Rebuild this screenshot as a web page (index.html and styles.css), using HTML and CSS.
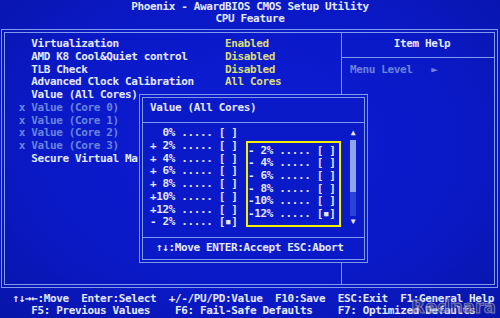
FILE: index.html
```html
<!DOCTYPE html>
<html lang="en">
<head>
    <meta charset="UTF-8">
    <meta name="viewport" content="width=device-width, initial-scale=1.0">
    <title>CPU Feature</title>
    <link rel="stylesheet" href="styles.css">
</head>
<body>
<div class="screen">
    <header class="title">
        <div>Phoenix - AwardBIOS CMOS Setup Utility</div>
        <div>CPU Feature</div>
    </header>

    <div class="frame">
        <div class="items">
            <div class="row"><span class="label">Virtualization</span><span class="value">Enabled</span></div>
            <div class="row"><span class="label">AMD K8 Cool&amp;Quiet control</span><span class="value">Disabled</span></div>
            <div class="row"><span class="label">TLB Check</span><span class="value">Disabled</span></div>
            <div class="row"><span class="label">Advanced Clock Calibration</span><span class="value">All Cores</span></div>
            <div class="row"><span class="label">Value (All Cores)</span></div>
            <div class="row off"><span class="mark">x</span><span class="label">Value (Core 0)</span></div>
            <div class="row off"><span class="mark">x</span><span class="label">Value (Core 1)</span></div>
            <div class="row off"><span class="mark">x</span><span class="label">Value (Core 2)</span></div>
            <div class="row off"><span class="mark">x</span><span class="label">Value (Core 3)</span></div>
            <div class="row"><span class="label">Secure Virtual Ma</span></div>
        </div>
        <div class="help">
            <div class="help-head">Item Help</div>
            <div class="help-body"><span class="dim">Menu Level   &#9658;</span></div>
        </div>
    </div>

    <footer class="keys">
        <div>&#8593;&#8595;&#8594;&#8592;:Move  Enter:Select  +/-/PU/PD:Value  F10:Save  ESC:Exit  F1:General Help</div>
        <div>   F5: Previous Values    F6: Fail-Safe Defaults    F7: Optimized Defaults</div>
    </footer>

    <!-- pop-up list sits over the item list -->
    <div class="popup">
        <div class="popup-title">Value (All Cores)</div>
        <div class="popup-body">
            <div class="list">
                <div>  0% ..... [ ]</div>
                <div>+ 2% ..... [ ]</div>
                <div>+ 4% ..... [ ]</div>
                <div>+ 6% ..... [ ]</div>
                <div>+ 8% ..... [ ]</div>
                <div>+10% ..... [ ]</div>
                <div>+12% ..... [ ]</div>
                <div>- 2% ..... [&#9642;]</div>
            </div>
            <div class="list marked">
                <div>- 2% ..... [ ]</div>
                <div>- 4% ..... [ ]</div>
                <div>- 6% ..... [ ]</div>
                <div>- 8% ..... [ ]</div>
                <div>-10% ..... [ ]</div>
                <div>-12% ..... [&#9642;]</div>
            </div>
            <div class="scroll">
                <span>&#9650;</span>
                <div class="track"><div class="thumb"></div></div>
                <span>&#9660;</span>
            </div>
        </div>
        <div class="popup-foot">&#8593;&#8595;:Move ENTER:Accept ESC:Abort</div>
    </div>

    <div class="watermark">Rednara</div>
</div>
</body>
</html>
```

FILE: styles.css
```css
:root {
    --cw: 6.25px;
    --rh: 12.72px;
    --bg: #0b19c4;
    --line: #7f9bec;
    --text: #e4e8ff;
    --yellow: #dcdc78;
    --dim: #6b83dc;
}
body {
    margin: 0;
    background: var(--bg);
}
.screen {
    position: relative;
    width: 500px;
    height: 318px;
    overflow: hidden;
    background: radial-gradient(ellipse at 50% 45%, #0c1ed6 0%, #0a19c6 60%, #0815aa 100%);
    color: var(--text);
    font-family: "DejaVu Sans Mono", monospace;
    font-weight: bold;
    font-size: 11px;
    letter-spacing: -0.37px;
    line-height: var(--rh);
}
.title div, .row, .help-body, .keys div, .list div, .popup-title, .popup-foot {
    white-space: pre;
}
.title {
    height: calc(var(--rh) * 2);
    padding-top: 0.5px;
    box-sizing: border-box;
    text-align: center;
}
.frame {
    box-sizing: border-box;
    width: 497px;
    height: 259px;
    margin: 3.5px 0 0 1px;
    border: 4px double var(--line);
    display: grid;
    grid-template-columns: 337px 1fr;
}
.items {
    border-right: 1px solid var(--line);
    padding: 5.3px 0 0 26.25px;
}
.row {
    display: flex;
    height: var(--rh);
}
.label {
    width: calc(var(--cw) * 31);
}
.value {
    color: var(--yellow);
}
.mark {
    width: calc(var(--cw) * 2);
    margin-left: calc(var(--cw) * -2);
}
.row.off {
    color: var(--dim);
}
.help-head {
    padding: 5.3px 0 6.1px 8px;
    text-align: center;
    border-bottom: 1px solid var(--line);
}
.help-body {
    padding: 5.6px 0 0 8px;
}
.dim {
    color: var(--dim);
}
.keys {
    margin-top: 4.6px;
    padding-left: calc(var(--cw) * 2);
}
.popup {
    position: absolute;
    left: 139px;
    top: 94px;
    width: 229px;
    height: 169px;
    box-sizing: border-box;
    border: 4px double var(--line);
    background: #0b1ac8;
}
.popup-title {
    padding: 3.8px 0 7px 7px;
    border-bottom: 1px solid var(--line);
}
.popup-body {
    box-sizing: border-box;
    height: 115px;
    display: flex;
    align-items: flex-start;
    padding: 4.7px 0 0 7px;
    border-bottom: 1px solid var(--line);
}
.list {
    width: calc(var(--cw) * 14);
}
.list.marked {
    width: 95px;
    box-sizing: border-box;
    margin: 13.8px 0 0 8.5px;
    padding: 1.5px 0 4px 0;
    border: 2px solid #f2f200;
}
.scroll {
    width: var(--cw);
    margin-left: 9px;
    display: flex;
    flex-direction: column;
    align-items: center;
    font-size: 8px;
    letter-spacing: 0;
}
.scroll span {
    height: var(--rh);
}
.track {
    width: 6px;
    height: calc(var(--rh) * 6);
    background: #2a43d6;
}
.thumb {
    height: 52px;
    background: #8ea6ee;
}
.popup-foot {
    padding: 4.5px 0 0 13px;
}
.watermark {
    position: absolute;
    right: 4px;
    bottom: 0;
    font-family: "DejaVu Sans", sans-serif;
    font-size: 18px;
    line-height: 22px;
    letter-spacing: 0;
    font-weight: bold;
    color: rgba(60, 60, 110, 0.5);
    -webkit-text-stroke: 1px rgba(200, 200, 215, 0.55);
}
```
